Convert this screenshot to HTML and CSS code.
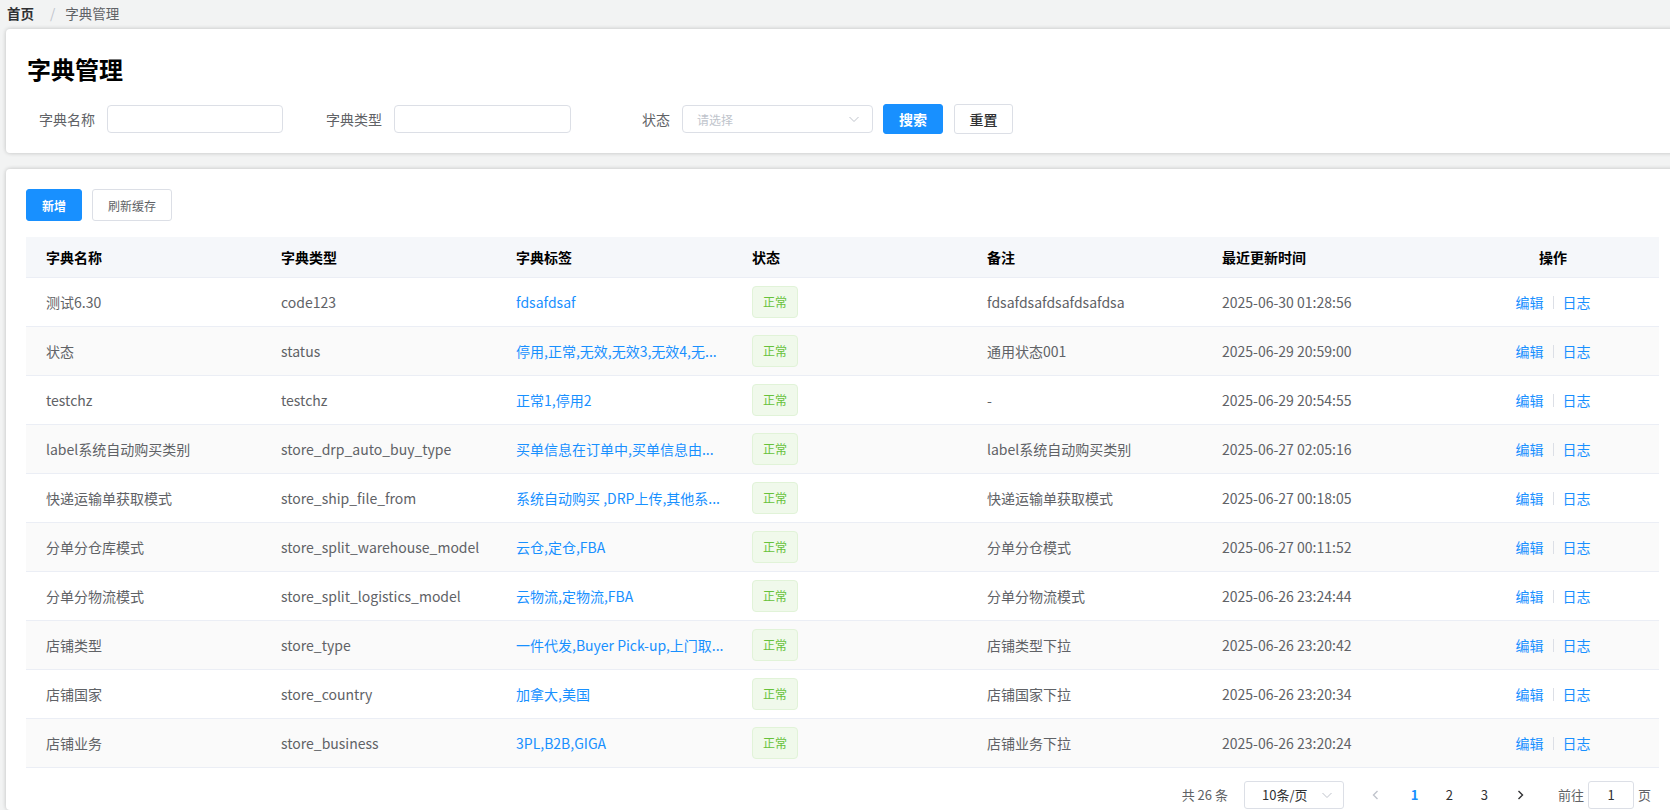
FILE: index.html
```html
<!DOCTYPE html>
<html lang="zh-CN">
<head>
<meta charset="utf-8">
<title>字典管理</title>
<link rel="stylesheet" href="styles.css">
</head>
<body>
<div class="page">
  <div class="crumbs"><span class="crumb-home">首页</span><span class="crumb-sep">/</span><span class="crumb-cur">字典管理</span></div>

  <section class="card card-search">
    <h1 class="title">字典管理</h1>
    <div class="form">
      <div class="form-item">
        <label class="form-label">字典名称</label>
        <div class="input w176"></div>
      </div>
      <div class="form-item">
        <label class="form-label">字典类型</label>
        <div class="input w177"></div>
      </div>
      <div class="form-item">
        <label class="form-label">状态</label>
        <div class="input select w191"><span class="placeholder">请选择</span>
          <svg class="chev" width="12" height="12" viewBox="0 0 12 12"><path d="M1.5 4 6 8.5 10.5 4" fill="none" stroke="#c0c4cc" stroke-width="1"/></svg>
        </div>
      </div>
      <button class="btn btn-primary btn-form">搜索</button>
      <button class="btn btn-default btn-form">重置</button>
    </div>
  </section>

  <section class="card card-table">
    <div class="toolbar">
      <button class="btn btn-primary btn-small">新增</button>
      <button class="btn btn-default btn-small">刷新缓存</button>
    </div>
    <table class="table">
      <colgroup>
        <col class="c1"><col class="c2"><col class="c3"><col class="c4"><col class="c5"><col class="c6"><col class="c7">
      </colgroup>
      <thead>
        <tr><th>字典名称</th><th>字典类型</th><th>字典标签</th><th>状态</th><th>备注</th><th>最近更新时间</th><th class="center">操作</th></tr>
      </thead>
      <tbody>
        <tr><td>测试6.30</td><td>code123</td><td class="link">fdsafdsaf</td><td><span class="tag">正常</span></td><td>fdsafdsafdsafdsafdsa</td><td>2025-06-30 01:28:56</td><td class="center ops"><a>编辑</a><i class="vsep"></i><a>日志</a></td></tr>
        <tr><td>状态</td><td>status</td><td class="link">停用,正常,无效,无效3,无效4,无...</td><td><span class="tag">正常</span></td><td>通用状态001</td><td>2025-06-29 20:59:00</td><td class="center ops"><a>编辑</a><i class="vsep"></i><a>日志</a></td></tr>
        <tr><td>testchz</td><td>testchz</td><td class="link">正常1,停用2</td><td><span class="tag">正常</span></td><td>-</td><td>2025-06-29 20:54:55</td><td class="center ops"><a>编辑</a><i class="vsep"></i><a>日志</a></td></tr>
        <tr><td>label系统自动购买类别</td><td>store_drp_auto_buy_type</td><td class="link">买单信息在订单中,买单信息由...</td><td><span class="tag">正常</span></td><td>label系统自动购买类别</td><td>2025-06-27 02:05:16</td><td class="center ops"><a>编辑</a><i class="vsep"></i><a>日志</a></td></tr>
        <tr><td>快递运输单获取模式</td><td>store_ship_file_from</td><td class="link">系统自动购买 ,DRP上传,其他系...</td><td><span class="tag">正常</span></td><td>快递运输单获取模式</td><td>2025-06-27 00:18:05</td><td class="center ops"><a>编辑</a><i class="vsep"></i><a>日志</a></td></tr>
        <tr><td>分单分仓库模式</td><td>store_split_warehouse_model</td><td class="link">云仓,定仓,FBA</td><td><span class="tag">正常</span></td><td>分单分仓模式</td><td>2025-06-27 00:11:52</td><td class="center ops"><a>编辑</a><i class="vsep"></i><a>日志</a></td></tr>
        <tr><td>分单分物流模式</td><td>store_split_logistics_model</td><td class="link">云物流,定物流,FBA</td><td><span class="tag">正常</span></td><td>分单分物流模式</td><td>2025-06-26 23:24:44</td><td class="center ops"><a>编辑</a><i class="vsep"></i><a>日志</a></td></tr>
        <tr><td>店铺类型</td><td>store_type</td><td class="link">一件代发,Buyer Pick-up,上门取...</td><td><span class="tag">正常</span></td><td>店铺类型下拉</td><td>2025-06-26 23:20:42</td><td class="center ops"><a>编辑</a><i class="vsep"></i><a>日志</a></td></tr>
        <tr><td>店铺国家</td><td>store_country</td><td class="link">加拿大,美国</td><td><span class="tag">正常</span></td><td>店铺国家下拉</td><td>2025-06-26 23:20:34</td><td class="center ops"><a>编辑</a><i class="vsep"></i><a>日志</a></td></tr>
        <tr><td>店铺业务</td><td>store_business</td><td class="link">3PL,B2B,GIGA</td><td><span class="tag">正常</span></td><td>店铺业务下拉</td><td>2025-06-26 23:20:24</td><td class="center ops"><a>编辑</a><i class="vsep"></i><a>日志</a></td></tr>
      </tbody>
    </table>
    <div class="pager">
      <span class="total">共 26 条</span>
      <div class="size-select"><span>10条/页</span>
        <svg class="chev" width="12" height="12" viewBox="0 0 12 12"><path d="M1.5 4 6 8.5 10.5 4" fill="none" stroke="#c0c4cc" stroke-width="1"/></svg>
      </div>
      <span class="pbtn"><svg width="12" height="12" viewBox="0 0 12 12"><path d="M7.5 2 3.5 6l4 4" fill="none" stroke="#c0c4cc" stroke-width="1.4"/></svg></span>
      <span class="pnum active">1</span>
      <span class="pnum">2</span>
      <span class="pnum">3</span>
      <span class="pbtn"><svg width="12" height="12" viewBox="0 0 12 12"><path d="M4.5 2 8.5 6l-4 4" fill="none" stroke="#303133" stroke-width="1.4"/></svg></span>
      <span class="jump">前往</span>
      <div class="jump-input">1</div>
      <span class="jump-page">页</span>
    </div>
  </section>
</div>
</body>
</html>
```
FILE: styles.css
```css
html, body {
  margin: 0;
  padding: 0;
  overflow: hidden;
  background: #f2f3f3;
  font-family: "Noto Sans CJK SC", "Noto Sans", sans-serif;
  color: #606266;
  font-size: 14px;
}

.page {
  width: 1673px;
  height: 810px;
  padding-left: 6px;
  overflow: hidden;
}

.crumbs {
  height: 29px;
  display: flex;
  align-items: center;
  padding-left: 1px;
  font-size: 13.5px;
  line-height: 26px;
  padding-bottom: 3px;
  box-sizing: border-box;
}
.crumb-home { font-weight: 700; color: #303133; }
.crumb-sep { color: #c0c4cc; margin: 0 10px 0 16px; }
.crumb-cur { color: #606266; }

.card {
  background: #fff;
  border-radius: 4px;
  box-shadow: 0 0 4px rgba(0, 0, 0, 0.22);
  box-sizing: border-box;
}

.card-search {
  padding: 22px 20px 20px;
  height: 124px;
}

.title {
  margin: 0 0 18px 1px;
  font-size: 24px;
  line-height: 36px;
  font-weight: 700;
  color: #000;
}

.form {
  display: flex;
  align-items: center;
  height: 28px;
}
.form-item {
  display: flex;
  align-items: center;
  margin-right: 30px;
}
.form-item:nth-child(3) { margin-right: 10px; }
.form-label {
  width: 81px;
  box-sizing: border-box;
  padding-right: 12px;
  text-align: right;
  color: #606266;
  font-size: 14px;
}
.input {
  height: 28px;
  border: 1px solid #dcdfe6;
  border-radius: 4px;
  box-sizing: border-box;
  background: #fff;
}
.w176 { width: 176px; }
.w177 { width: 177px; }
.w191 { width: 191px; }
.select {
  display: flex;
  align-items: center;
  justify-content: space-between;
  padding: 0 12px 0 14px;
}
.placeholder { color: #c0c4cc; font-size: 12px; }

.btn {
  font-family: inherit;
  border-radius: 3px;
  box-sizing: border-box;
  cursor: pointer;
  padding: 0;
}
.btn-primary {
  background: #1890ff;
  border: 1px solid #1890ff;
  color: #fff;
  font-weight: 700;
}
.btn-default {
  background: #fff;
  border: 1px solid #dcdfe6;
  color: #606266;
}
.btn-form {
  height: 30px;
  width: 60px;
  font-size: 14px;
  margin-right: 11px;
}
.btn-form.btn-default { width: 59px; font-weight: 500; color: #303133; }

.card-table {
  margin-top: 16px;
  padding: 20px 20px 0;
  height: 641px;
}

.toolbar {
  display: flex;
  gap: 10px;
  margin-bottom: 16px;
}
.btn-small {
  height: 32px;
  font-size: 12px;
  padding: 0 15px;
}
.btn-small.btn-primary { width: 56px; padding: 0; }
.btn-small.btn-default { width: 80px; padding: 0; }

.table {
  width: 1633px;
  table-layout: fixed;
  border-collapse: collapse;
}
.c1, .c2, .c4, .c5, .c6 { width: 235px; }
.c3 { width: 236px; }
.c7 { width: 222px; }

.table th {
  height: 40px;
  background: #f5f7fa;
  color: #000;
  font-weight: 700;
  font-size: 14px;
  text-align: left;
  padding: 0 10px 0 20px;
  border-bottom: 1px solid #ebeef5;
  box-sizing: border-box;
}
.table td {
  height: 49px;
  padding: 0 8px 0 20px;
  border-bottom: 1px solid #ebeef5;
  color: #606266;
  font-size: 14px;
  white-space: nowrap;
  box-sizing: border-box;
}
.table tbody tr:nth-child(even) td { background: #fafafa; }
.table .center { text-align: center; padding: 0 0 0 10px; }

.table .link { color: #1890ff; }

.tag {
  display: inline-flex;
  align-items: center;
  justify-content: center;
  width: 46px;
  height: 32px;
  box-sizing: border-box;
  background: #f0f9eb;
  border: 1px solid #e1f3d8;
  border-radius: 4px;
  color: #67c23a;
  font-size: 12px;
}

.ops a {
  color: #1890ff;
  font-size: 14px;
  cursor: pointer;
}
.vsep {
  display: inline-block;
  width: 1px;
  height: 13px;
  background: #dcdfe6;
  margin: 0 9px;
  vertical-align: -1px;
}

.pager {
  display: flex;
  align-items: center;
  justify-content: flex-end;
  width: 1625px;
  margin-top: 13px;
  height: 28px;
  font-size: 13px;
  color: #606266;
}
.total { margin-right: 16px; }
.size-select {
  width: 100px;
  height: 28px;
  border: 1px solid #dcdfe6;
  border-radius: 3px;
  box-sizing: border-box;
  display: flex;
  align-items: center;
  justify-content: space-between;
  padding: 0 10px 0 17px;
  color: #303133;
  margin-right: 14px;
}
.pbtn {
  width: 36px;
  height: 28px;
  display: flex;
  align-items: center;
  justify-content: center;
}
.pnum {
  width: 35px;
  height: 28px;
  display: flex;
  align-items: center;
  justify-content: center;
  color: #303133;
}
.pnum.active { color: #1890ff; font-weight: 700; margin-left: 3px; }
.jump { margin-left: 20px; margin-right: 4px; }
.jump-input {
  width: 46px;
  height: 28px;
  border: 1px solid #dcdfe6;
  border-radius: 3px;
  box-sizing: border-box;
  display: flex;
  align-items: center;
  justify-content: center;
  color: #303133;
  margin-right: 4px;
}
```
